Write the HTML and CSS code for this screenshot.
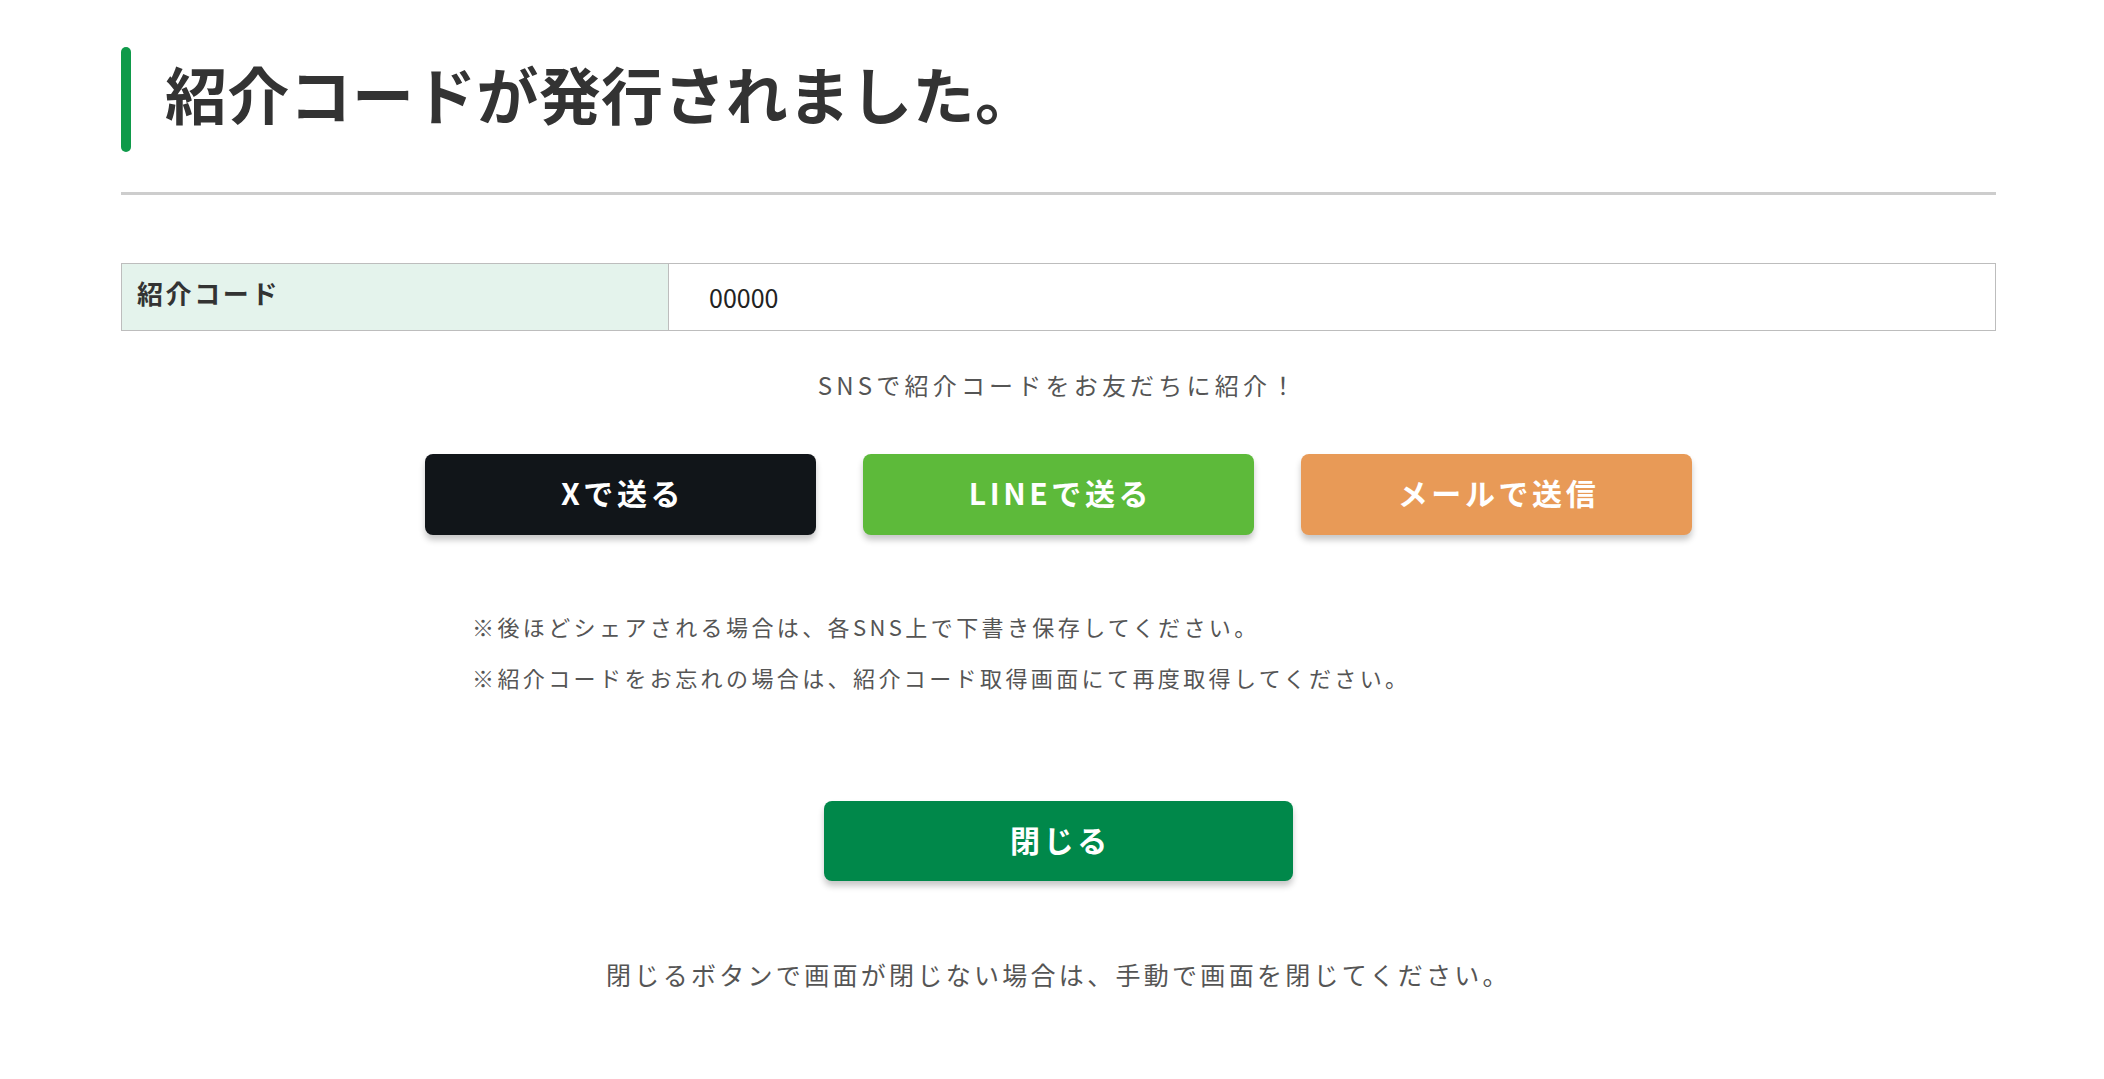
FILE: index.html
```html
<!DOCTYPE html>
<html lang="ja">
<head>
<meta charset="utf-8">
<title>紹介コードが発行されました。</title>
<link rel="stylesheet" href="styles.css">
</head>
<body>
<main class="container">
  <h1 class="title"><span class="title-text">紹介コードが発行されました。</span></h1>
  <hr class="divider">
  <table class="code-table">
    <tr>
      <th class="code-label">紹介コード</th>
      <td class="code-value">00000</td>
    </tr>
  </table>
  <p class="sns-lead">SNSで紹介コードをお友だちに紹介！</p>
  <div class="share-row">
    <a class="btn btn-x" href="#">Xで送る</a>
    <a class="btn btn-line" href="#">LINEで送る</a>
    <a class="btn btn-mail" href="#">メールで送信</a>
  </div>
  <ul class="notes">
    <li>※後ほどシェアされる場合は、各SNS上で下書き保存してください。</li>
    <li>※紹介コードをお忘れの場合は、紹介コード取得画面にて再度取得してください。</li>
  </ul>
  <div class="close-row">
    <a class="btn btn-close" href="#">閉じる</a>
  </div>
  <p class="close-note">閉じるボタンで画面が閉じない場合は、手動で画面を閉じてください。</p>
</main>
</body>
</html>
```
FILE: styles.css
```css
html, body {
  margin: 0;
  padding: 0;
  background: #ffffff;
}

body {
  font-family: "Noto Sans CJK JP", "Noto Sans", sans-serif;
  color: #333333;
}

.container {
  width: 1875px;
  margin-left: 121px;
  padding-top: 47px;
}

.title {
  display: flex;
  align-items: center;
  height: 105px;
  margin: 0;
  font-size: 62px;
  font-weight: 700;
  line-height: 62px;
  letter-spacing: 0.3px;
  color: #333333;
}

.title::before {
  content: "";
  flex-shrink: 0;
  width: 10px;
  height: 105px;
  border-radius: 5px;
  background: #0f9a4a;
  margin-right: 34px;
}

.title-text {
  margin-bottom: 14px;
}

.divider {
  margin: 40px 0 0;
  height: 3px;
  border: 0;
  background: #cdcdcd;
}

.code-table {
  width: 100%;
  margin-top: 68px;
  border-collapse: collapse;
}

.code-label,
.code-value {
  height: 67px;
  padding: 0;
  border: 1px solid #bdbdbd;
  box-sizing: border-box;
  vertical-align: middle;
  text-align: left;
}

.code-label {
  width: 547px;
  padding-left: 15px;
  padding-bottom: 9px;
  background: #e4f3ec;
  font-size: 26px;
  font-weight: 700;
  letter-spacing: 2.6px;
  color: #333333;
}

.code-value {
  padding-left: 40px;
  font-size: 25px;
  font-weight: 400;
  color: #222222;
}

.sns-lead {
  margin: 36px 0 0;
  text-align: center;
  font-size: 24px;
  line-height: 36px;
  letter-spacing: 4.2px;
  color: #555555;
}

.share-row {
  display: flex;
  justify-content: center;
  gap: 47px;
  margin-top: 51px;
}

.btn {
  display: flex;
  align-items: center;
  justify-content: center;
  width: 391px;
  height: 81px;
  border-radius: 8px;
  box-shadow: 0 5px 6px rgba(0, 0, 0, 0.22);
  color: #ffffff;
  text-decoration: none;
  font-size: 30px;
  font-weight: 700;
  letter-spacing: 3.6px;
  box-sizing: border-box;
  padding-left: 4px;
  padding-bottom: 6px;
}

.btn-x {
  background: #111519;
}

.btn-line {
  background: #5dba3a;
}

.btn-mail {
  background: #e89a57;
}

.notes {
  list-style: none;
  margin: 66px 0 0;
  padding: 0 0 0 351px;
  font-size: 22px;
  line-height: 51px;
  letter-spacing: 3.4px;
  color: #555555;
}

.close-row {
  display: flex;
  justify-content: center;
  margin-top: 98px;
}

.btn-close {
  width: 469px;
  height: 80px;
  background: #00884a;
  padding-bottom: 4px;
}

.close-note {
  margin: 75px 0 0;
  text-align: center;
  font-size: 25px;
  line-height: 36px;
  letter-spacing: 3.3px;
  color: #555555;
}
```
